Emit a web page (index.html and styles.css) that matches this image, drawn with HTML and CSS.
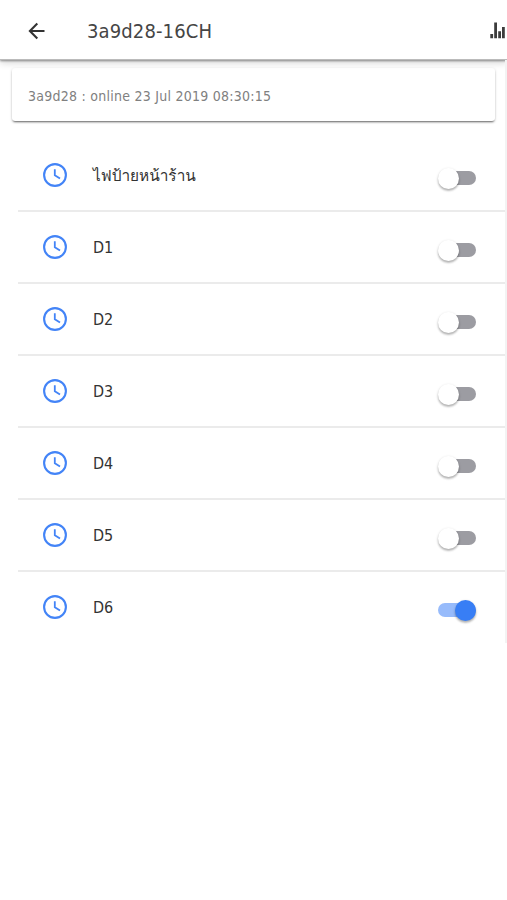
FILE: index.html
```
<!DOCTYPE html>
<html lang="th">
<head>
<meta charset="utf-8">
<title>3a9d28-16CH</title>
<link rel="stylesheet" href="styles.css">
</head>
<body>
<svg class="defs" width="0" height="0" aria-hidden="true">
  <symbol id="clock" viewBox="0 0 26 26">
    <circle cx="13" cy="13" r="10.9" fill="none" stroke="currentColor" stroke-width="2.1"/>
    <path d="M12.8 7.2V13.2L18 16.6" fill="none" stroke="currentColor" stroke-width="1.8"/>
  </symbol>
</svg>
<header class="bar">
  <svg class="back" viewBox="0 0 18 18"><path d="M16.500 9H2M9.3 1.600L1.9 9L9.3 16.400" fill="none" stroke="currentColor" stroke-width="2.1"/></svg>
  <h1 class="title">3a9d28-16CH</h1>
  <svg class="stats" viewBox="0 0 17 17"><path d="M.3 12h2.800v4.200H.3zM4.200 .5h2.800v15.700h-2.800zM8.200 9.300h2.800v6.900h-2.800zM12 5h2.800v11.200h-2.800z" fill="currentColor"/></svg>
</header>
<main class="content">
  <section class="card"><span class="status">3a9d28 : online 23 Jul 2019 08:30:15</span></section>
  <ul class="list">
    <li class="row"><svg class="clock"><use href="#clock"/></svg><span class="label thai">ไฟป้ายหน้าร้าน</span><span class="toggle"></span></li>
    <li class="row"><svg class="clock"><use href="#clock"/></svg><span class="label">D1</span><span class="toggle"></span></li>
    <li class="row"><svg class="clock"><use href="#clock"/></svg><span class="label">D2</span><span class="toggle"></span></li>
    <li class="row"><svg class="clock"><use href="#clock"/></svg><span class="label">D3</span><span class="toggle"></span></li>
    <li class="row"><svg class="clock"><use href="#clock"/></svg><span class="label">D4</span><span class="toggle"></span></li>
    <li class="row"><svg class="clock"><use href="#clock"/></svg><span class="label">D5</span><span class="toggle"></span></li>
    <li class="row"><svg class="clock"><use href="#clock"/></svg><span class="label">D6</span><span class="toggle on"></span></li>
  </ul>
</main>
</body>
</html>
```
FILE: styles.css
```
* { box-sizing: border-box; }
body {
  margin: 0;
  height: 900px;
  overflow: hidden;
  background: #fff;
  font-family: "DejaVu Sans Condensed", "DejaVu Sans", "Noto Sans", sans-serif;
}
.defs { display: none; }
.bar {
  display: flex;
  align-items: center;
  height: 60px;
  padding: 2px 0 0 28px;
  border-bottom: 1px solid #bbb;
  box-shadow: 0 1px 2px rgba(0,0,0,.4), 0 3px 7px rgba(0,0,0,.16);
}
.back { width: 18px; height: 18px; color: #333; flex: none; }
.title {
  flex: 1;
  margin: 0 0 0 41px;
  font-size: 20px;
  font-weight: 400;
  line-height: 28px;
  letter-spacing: .12px;
  color: #454545;
}
.stats { width: 17px; height: 17px; color: #3c3c3c; flex: none; }
.content {
  height: 583px;
  padding-top: 8px;
  border-right: 2px solid #f3f3f3;
}
.card {
  display: flex;
  align-items: center;
  height: 53px;
  margin: 0 10px 0 12px;
  padding: 2px 16px 0;
  border-radius: 3px;
  box-shadow: 0 2px 2px -1px rgba(0,0,0,.5), 0 1px 3px rgba(0,0,0,.2);
}
.status {
  font-size: 14px;
  line-height: 20px;
  letter-spacing: .25px;
  color: #808080;
  white-space: nowrap;
}
.list { margin: 19px 0 0 18px; padding: 0; list-style: none; }
.row {
  display: flex;
  align-items: center;
  height: 72px;
  padding: 0 29px 0 24px;
  border-bottom: 2px solid #ebebeb;
}
.row:last-child { border-bottom-color: transparent; }
.clock { width: 26px; height: 26px; color: #4384f7; flex: none; }
.label {
  flex: 1;
  margin-left: 25px;
  padding-top: 2px;
  font-size: 16px;
  line-height: 24px;
  color: #333;
}
.thai {
  font-family: Loma, "Noto Sans Thai Looped", "Noto Sans Thai", "Noto Sans", sans-serif;
  font-size: 15.4px;
}
.toggle {
  position: relative;
  top: 3px;
  width: 38px;
  height: 14px;
  border-radius: 7px;
  background: #9c9ca2;
  flex: none;
}
.toggle::after {
  content: "";
  position: absolute;
  left: 0;
  top: -3px;
  width: 21px;
  height: 21px;
  border-radius: 50%;
  background: #fff;
  box-shadow: 0 2px 2px rgba(0,0,0,.2), 0 1px 3px rgba(0,0,0,.18);
}
.toggle:not(.on) { width: 32px; margin-left: 6px; }
.toggle:not(.on)::after { left: -6px; }
.toggle.on { background: #97bbfb; }
.toggle.on::after { left: 17px; background: #387ef5; }
```
